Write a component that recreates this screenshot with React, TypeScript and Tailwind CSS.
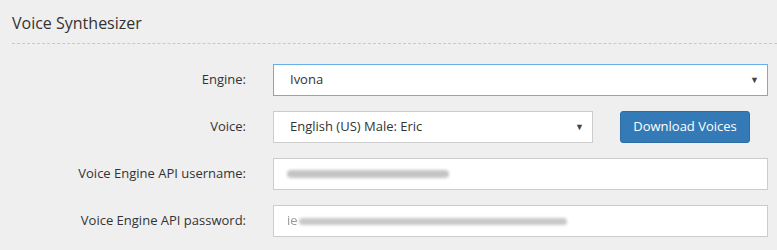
import { ReactNode } from "react";

const font = { fontFamily: '"Open Sans", "Liberation Sans", sans-serif' };

function Row({ label, children }: { label: string; children: ReactNode }) {
  return (
    <div className="flex items-center h-[32px]">
      <label className="w-[246px] text-right text-[13px] text-[#333]">{label}</label>
      <div className="ml-[27px] flex items-center gap-[27px]">{children}</div>
    </div>
  );
}

function Select({ value, width, focused }: { value: string; width: string; focused?: boolean }) {
  return (
    <div
      className={`${width} h-[32px] bg-white border ${
        focused ? "border-[#66afe9]" : "border-[#ccc]"
      } flex items-center justify-between pl-[16px] pr-[8px] text-[13px] text-[#333]`}
    >
      <span>{value}</span>
      <span className="text-[9px] text-[#444]">▼</span>
    </div>
  );
}

export default function App() {
  return (
    <div className="w-[777px] h-[250px] bg-[#efefef] overflow-hidden" style={font}>
      <div className="ml-[12px] pt-[11px] pb-[8px] border-b border-dashed border-[#c8c8c8]">
        <h2 className="text-[16px] leading-[24px] text-[#333]">Voice Synthesizer</h2>
      </div>
      <div className="mt-[20px] flex flex-col gap-[15px]">
        <Row label="Engine:">
          <Select value="Ivona" width="w-[495px]" focused />
        </Row>
        <Row label="Voice:">
          <Select value="English (US) Male: Eric" width="w-[320px]" />
          <button className="h-[32px] w-[130px] rounded-[3px] bg-[#337ab7] border border-[#2e6da4] text-white text-[13px]">
            Download Voices
          </button>
        </Row>
        <Row label="Voice Engine API username:">
          <div className="w-[495px] h-[32px] bg-white border border-[#ccc] flex items-center pl-[13px]">
            <div className="w-[162px] h-[8px] rounded-full bg-[#c4c4c4] blur-[1.5px]" />
          </div>
        </Row>
        <Row label="Voice Engine API password:">
          <div className="w-[495px] h-[32px] bg-white border border-[#ccc] flex items-center pl-[13px]">
            <span className="text-[13px] text-[#999] blur-[0.6px]">ie</span>
            <div className="w-[268px] h-[7px] rounded-full bg-[#c8c8c8] blur-[1.5px] ml-[1px]" />
          </div>
        </Row>
      </div>
    </div>
  );
}
